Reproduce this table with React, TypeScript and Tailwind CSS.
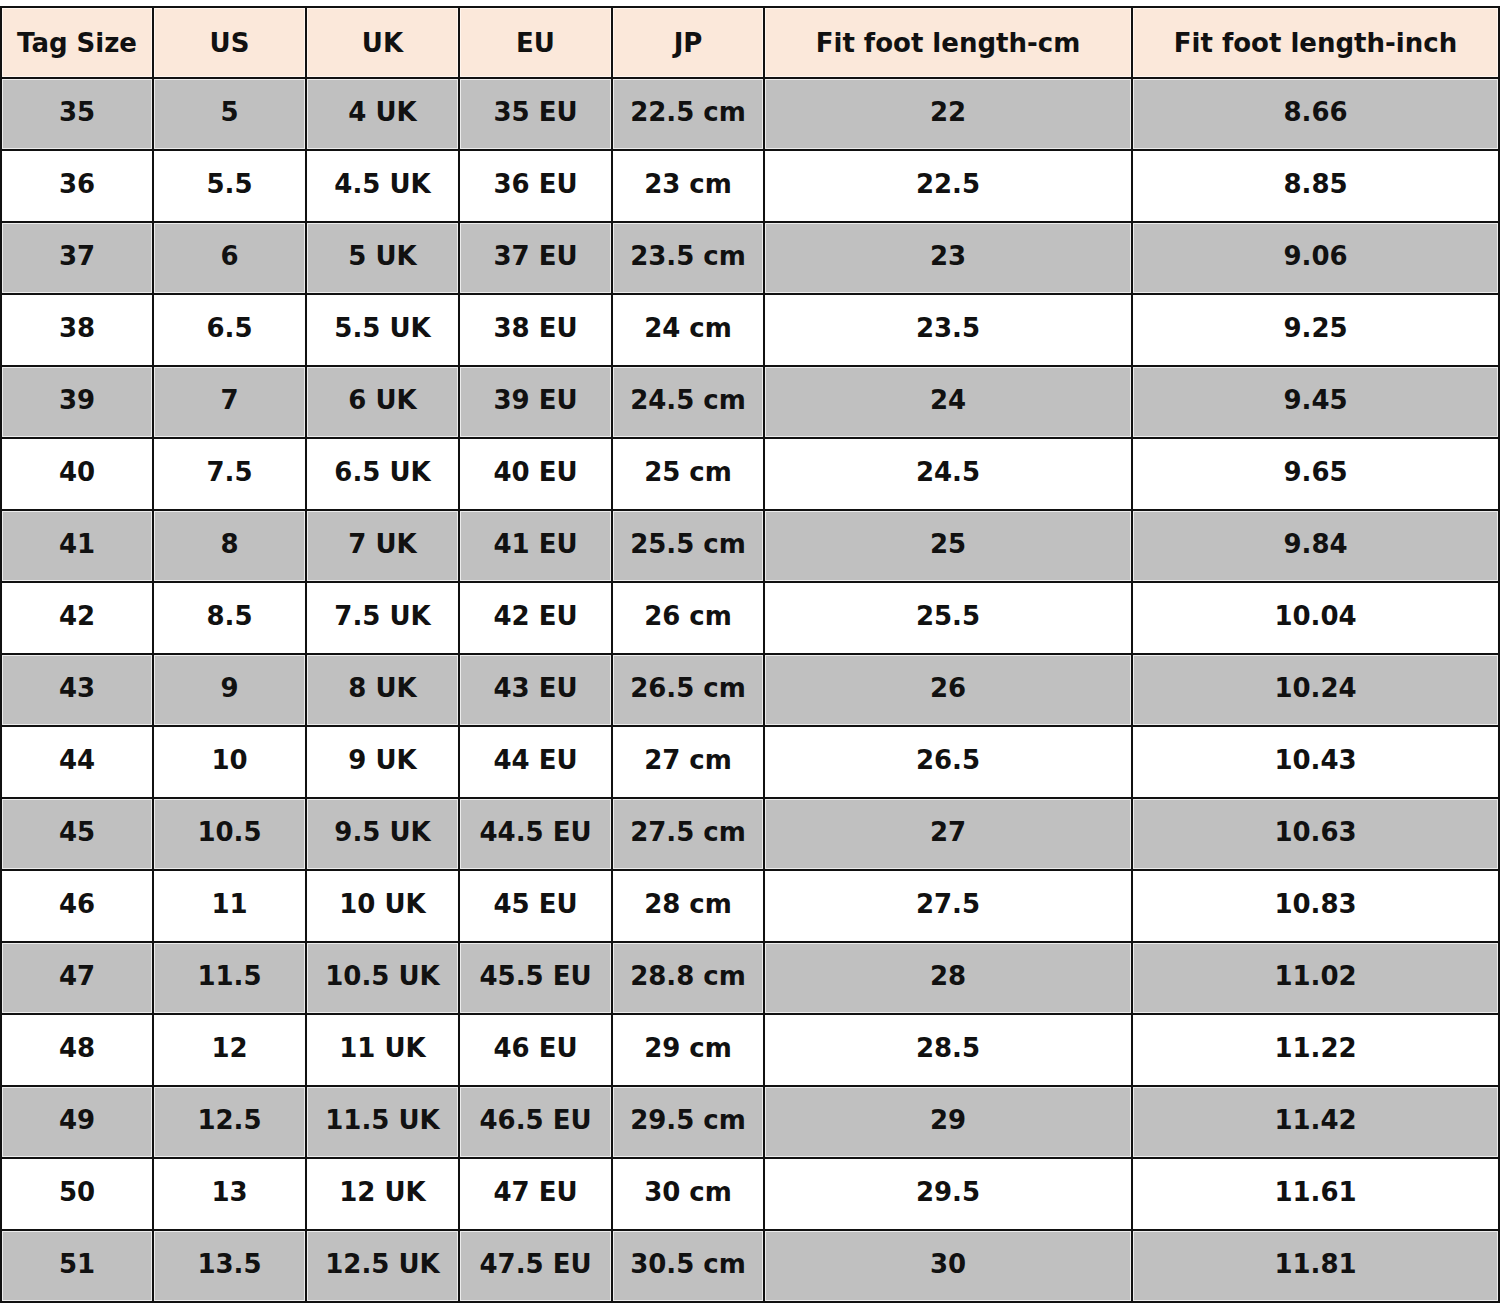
import React from "react";

const headers = ["Tag Size", "US", "UK", "EU", "JP", "Fit foot length-cm", "Fit foot length-inch"];

const rows: string[][] = [
  ["35", "5", "4 UK", "35 EU", "22.5 cm", "22", "8.66"],
  ["36", "5.5", "4.5 UK", "36 EU", "23 cm", "22.5", "8.85"],
  ["37", "6", "5 UK", "37 EU", "23.5 cm", "23", "9.06"],
  ["38", "6.5", "5.5 UK", "38 EU", "24 cm", "23.5", "9.25"],
  ["39", "7", "6 UK", "39 EU", "24.5 cm", "24", "9.45"],
  ["40", "7.5", "6.5 UK", "40 EU", "25 cm", "24.5", "9.65"],
  ["41", "8", "7 UK", "41 EU", "25.5 cm", "25", "9.84"],
  ["42", "8.5", "7.5 UK", "42 EU", "26 cm", "25.5", "10.04"],
  ["43", "9", "8 UK", "43 EU", "26.5 cm", "26", "10.24"],
  ["44", "10", "9 UK", "44 EU", "27 cm", "26.5", "10.43"],
  ["45", "10.5", "9.5 UK", "44.5 EU", "27.5 cm", "27", "10.63"],
  ["46", "11", "10 UK", "45 EU", "28 cm", "27.5", "10.83"],
  ["47", "11.5", "10.5 UK", "45.5 EU", "28.8 cm", "28", "11.02"],
  ["48", "12", "11 UK", "46 EU", "29 cm", "28.5", "11.22"],
  ["49", "12.5", "11.5 UK", "46.5 EU", "29.5 cm", "29", "11.42"],
  ["50", "13", "12 UK", "47 EU", "30 cm", "29.5", "11.61"],
  ["51", "13.5", "12.5 UK", "47.5 EU", "30.5 cm", "30", "11.81"],
];

export default function App() {
  return (
    <div className="w-[1500px] h-[1307px] bg-white pt-[6px]" style={{ fontFamily: '"DejaVu Sans", "Liberation Sans", sans-serif' }}>
      <div className="grid grid-cols-[150px_151px_151px_151px_150px_366px_365px] gap-[2px] bg-[#111] p-[2px] w-[1500px] text-[26px] font-bold text-[#111] leading-none">
        {headers.map((h) => (
          <div key={h} className="h-[69px] bg-[#fbe8da] flex items-center justify-center whitespace-nowrap shadow-[inset_0_0_0_1px_#fff6ef]">
            {h}
          </div>
        ))}
        {rows.map((r, i) =>
          r.map((c, j) => (
            <div
              key={i + "-" + j}
              className={
                "h-[70px] flex items-center justify-center whitespace-nowrap pb-[4px] " +
                (i % 2 === 0 ? "bg-[#c0c0c0] shadow-[inset_0_0_0_1px_#ececec]" : "bg-white")
              }
            >
              {c}
            </div>
          ))
        )}
      </div>
    </div>
  );
}
